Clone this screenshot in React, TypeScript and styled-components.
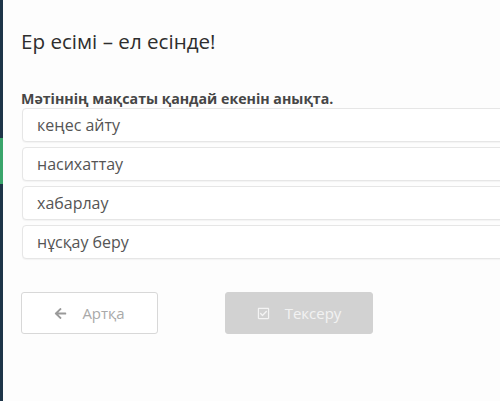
import React from 'react'
import styled, { createGlobalStyle } from 'styled-components'
import { FaArrowLeft, FaRegCheckSquare } from 'react-icons/fa'

const GlobalStyle = createGlobalStyle`
  html, body {
    margin: 0;
    padding: 0;
    background: #fdfdfd;
    overflow: hidden;
  }
  * {
    box-sizing: border-box;
  }
`

const Layout = styled.div`
  display: flex;
  width: 500px;
  height: 401px;
  font-family: 'Open Sans', 'Noto Sans', sans-serif;
`

const SideNav = styled.div`
  display: flex;
  flex-direction: column;
  width: 3px;
  flex-shrink: 0;
  background: #1e3548;
`

const NavItem = styled.div<{ active?: boolean; grow?: boolean }>`
  height: ${({ grow }) => (grow ? 'auto' : '46px')};
  flex: ${({ grow }) => (grow ? 1 : 'none')};
  background: ${({ active }) => (active ? '#3aa56b' : 'transparent')};
`

const Content = styled.main`
  flex: 1;
  padding: 27px 0 0 18px;
  overflow: hidden;
`

const Title = styled.h1`
  margin: 0;
  font-size: 20.6px;
  font-weight: 400;
  color: #2e2e2e;
  line-height: 28px;
`

const Question = styled.div`
  margin-top: 35px;
  font-size: 14.2px;
  font-weight: 700;
  color: #464646;
  line-height: 18px;
`

const Options = styled.div`
  display: flex;
  flex-direction: column;
  gap: 5px;
  margin-left: 1px;
  width: 500px;
`

const Option = styled.div`
  height: 34px;
  display: flex;
  align-items: center;
  padding-left: 14px;
  border: 1px solid #e6e6e6;
  border-radius: 4px;
  background: #fff;
  font-size: 16px;
  color: #555;
  box-shadow: 0 1px 1px rgba(0, 0, 0, 0.04);
`

const Actions = styled.div`
  display: flex;
  gap: 67px;
  margin-top: 33px;
`

const Button = styled.button<{ primary?: boolean }>`
  display: flex;
  align-items: center;
  justify-content: center;
  gap: 15px;
  height: 42px;
  width: ${({ primary }) => (primary ? '148px' : '137px')};
  border: 1px solid ${({ primary }) => (primary ? '#d2d2d2' : '#d8d8d8')};
  border-radius: 3px;
  background: ${({ primary }) => (primary ? '#d2d2d2' : '#fff')};
  color: ${({ primary }) => (primary ? '#f2f2f2' : '#a9a9a9')};
  font-family: 'Open Sans', 'Noto Sans', sans-serif;
  font-size: 15px;
  padding: 0;

  svg {
    font-size: 13px;
    color: ${({ primary }) => (primary ? '#f4f4f4' : '#9a9a9a')};
  }
`

const answers = ['кеңес айту', 'насихаттау', 'хабарлау', 'нұсқау беру']

export default function App() {
  return (
    <Layout>
      <GlobalStyle />
      <SideNav>
        <NavItem />
        <NavItem />
        <NavItem />
        <NavItem active />
        <NavItem grow />
      </SideNav>
      <Content>
        <Title>Ер есімі – ел есінде!</Title>
        <Question>Мәтіннің мақсаты қандай екенін анықта.</Question>
        <Options>
          {answers.map(a => (
            <Option key={a}>{a}</Option>
          ))}
        </Options>
        <Actions>
          <Button>
            <FaArrowLeft />
            Артқа
          </Button>
          <Button primary>
            <FaRegCheckSquare />
            Тексеру
          </Button>
        </Actions>
      </Content>
    </Layout>
  )
}
